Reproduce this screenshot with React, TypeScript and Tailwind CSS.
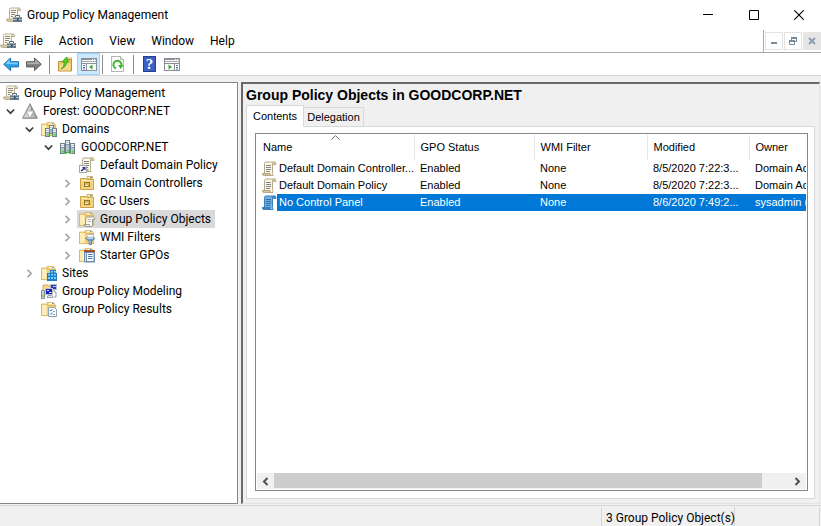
import type { ReactNode } from 'react';

const uiFont = "font-[Roboto,'Noto_Sans',sans-serif]";
const listFont = "font-['Liberation_Sans',Arial,sans-serif]";

function Icon({ children }: { children: ReactNode }) {
  return (
    <svg width="16" height="16" viewBox="0 0 16 16" className="block shrink-0" aria-hidden="true">
      {children}
    </svg>
  );
}

function ScrollShape({ blue = false }: { blue?: boolean }) {
  const paper = blue ? '#6fb2e2' : '#fdf8e4';
  const edge = blue ? '#3a80ba' : '#b3a888';
  const shade = blue ? '#3c86c4' : '#d6c690';
  const ink = blue ? '#2f6fa8' : '#83838c';
  return (
    <g>
      <path d="M4 1h9.500v2H12v10.500H3.500V2z" fill={paper} />
      <path d="M3.500 12V2.500Q3.500 1 5 1h9" fill="none" stroke={edge} />
      <path d="M11.500 3.500v9" stroke={edge} />
      <path d="M11.500 3.500V2q.5-1 2-1t1.500 1.500v1z" fill={shade} stroke={edge} strokeWidth=".8" />
      <path d="M1 12h8.500v3H3q-2 0-2-3z" fill={shade} />
      <path d="M1.500 12.500h7.500v2h3V13M1.500 12.500q0 2 2 2H11" fill="none" stroke={edge} />
      <path d="M5 4.500h5M5 6.500h5M5 8.500h5M5 10.500h4" stroke={ink} />
    </g>
  );
}

function FolderShape() {
  return (
    <g>
      <path d="M6 1.500h6.500L14 3v10H6z" fill="#f7dd95" stroke="#d3ab52" strokeWidth=".7" />
      <path d="M8.500 2.500h3" stroke="#fffbe8" />
      <path d="M11 2.500h1.500" stroke="#4f9fe0" />
      <path d="M0 3h5.500L7 4.500h8V15H0z" fill="#f2d17c" />
      <path d="M1 4h4v10.500H1z" fill="#fdecb4" />
      <path d="M5 4.500v10" stroke="#fff6d6" />
      <path d="M.4 3h5.200L7 4.500h7.600V14.600H.4z" fill="none" stroke="#d3ab52" strokeWidth=".7" />
    </g>
  );
}

function Tower({ x, y, h }: { x: number; y: number; h: number }) {
  return (
    <g>
      <rect x={x} y={y} width="5" height={h} fill="#70828c" />
      <rect x={x + 1} y={y + 1} width="3" height={h - 2} fill="#b4c6d0" />
      <path d={`M${x + 1} ${y + 1.5}h3M${x + 1} ${y + 3.5}h3`} stroke="#f1f7fa" />
      <path d={`M${x + 1} ${y + 4.5}h3`} stroke="#8699a4" />
      <rect x={x + 2} y={y + h - 3} width="2" height="1.500" fill="#4fe024" />
    </g>
  );
}

const ConsoleIcon = () => (
  <Icon>
    <path d="M4 1h9.500v2H12v9H3.500V2z" fill="#fdf8e6" />
    <path d="M3.500 12V2.500Q3.500 1 5 1h8.500" fill="none" stroke="#b5ae9a" />
    <path d="M11.500 8V2.500q.5-1.500 2-1.200t1 2.200h-3" fill="#e2d8b8" stroke="#b5ae9a" />
    <path d="M.5 12h7v2.500h-5q-2 0-2-2.500z" fill="#dccfa4" stroke="#a89f84" strokeWidth=".8" />
    <path d="M5 3.500h5M5 5.500h5M5 7.500h4M5 9.500h2" stroke="#88888e" />
    <path d="M9.500 10V8.500h4V10" fill="none" stroke="#566573" />
    <rect x="7" y="10" width="9" height="5" fill="#647b8e" />
    <path d="M7.500 10.500h8" stroke="#93a7b7" />
    <path d="M7 12.500h9" stroke="#aebdc9" />
    <rect x="11" y="11.500" width="1.500" height="2" fill="#2b3944" />
  </Icon>
);

const ForestIcon = () => (
  <Icon>
    <path d="M8 .6 15.500 15.400H.5z" fill="#f2f2f2" stroke="#8b8b8b" strokeWidth=".9" strokeLinejoin="round" />
    <path d="M8 1.500 11.500 8H4.600z" fill="#d4d4d4" stroke="#8f8f8f" strokeWidth=".7" />
    <path d="M4.400 8.300 7.800 14.800H1z" fill="#d4d4d4" stroke="#8f8f8f" strokeWidth=".7" />
    <path d="M11.600 8.300 15 14.800H8.200z" fill="#bcbcbc" stroke="#8f8f8f" strokeWidth=".7" />
    <path d="M8.500 2 11 7.500H9zM12 9l2.500 5.500H13z" fill="#8e8e8e" />
    <path d="M5.200 8.700h5.600L8 14z" fill="#ffffff" />
  </Icon>
);

const DomainsIcon = () => (
  <Icon>
    <FolderShape />
    <Tower x={8} y={4} h={9} />
    <Tower x={4} y={7} h={9} />
    <Tower x={11} y={7} h={9} />
  </Icon>
);

const DomainIcon = () => (
  <Icon>
    <Tower x={5} y={1} h={13} />
    <Tower x={0} y={4} h={11} />
    <Tower x={10} y={4} h={11} />
    <rect x="4" y="14" width="3" height="1" fill="#4fe024" />
    <rect x="9" y="14" width="3" height="1" fill="#4fe024" />
  </Icon>
);

const ScrollIcon = ({ blue = false }: { blue?: boolean }) => (
  <Icon>
    <ScrollShape blue={blue} />
  </Icon>
);

const LinkedScrollIcon = () => (
  <Icon>
    <ScrollShape />
    <rect x=".5" y="8.500" width="7" height="7" fill="#fff" stroke="#a5a5a5" />
    <path d="M3 10h3.500v3.500L5.300 12.300 2.800 14.500 1.700 13.500 4.200 11.200z" fill="#28288e" />
  </Icon>
);

const OuIcon = () => (
  <Icon>
    <path d="M8 1.500h5.500V4H8z" fill="#fbeebb" stroke="#cda347" strokeWidth=".8" />
    <path d="M11 2.500h2" stroke="#4f9fe0" />
    <path d="M1.500 3.500H7L8 4.500h6.500v10h-13z" fill="#f3d37c" stroke="#cda347" />
    <path d="M2.500 5.500h11" stroke="#fdebb2" />
    <rect x="5" y="7" width="6" height="5" fill="#8f7528" />
    <rect x="6" y="8" width="4" height="3" fill="#d8bd62" />
    <path d="M6 10.500h3" stroke="#fff0bf" />
  </Icon>
);

const GpoFolderIcon = () => (
  <Icon>
    <FolderShape />
    <path d="M7.500 6h7q1.500.3 1 2.500h-2V15H7z" fill="#fdfcf5" />
    <path d="M6.500 13V7.500Q6.500 6 8 6h6.500q1.500.5 1 2.500h-2V14q0 1-1 1.500H6.500q-1.500-.5-1.500-2h5.500q0 1.500 1 2" fill="none" stroke="#9f9a8a" />
    <path d="M8.500 8.500h3.500M8.500 10.500h3.500" stroke="#b5b5b5" />
  </Icon>
);

const WmiIcon = () => (
  <Icon>
    <FolderShape />
    <path d="M9 5h6v4H9z" fill="#f4f4f4" />
    <path d="M9.500 5.500h5v3" fill="none" stroke="#b7b7b7" />
    <path d="M6.500 9h9.200L12.500 12.500v3h-2.500v-3z" fill="#6d97c2" stroke="#4d7299" strokeWidth=".8" />
    <path d="M8 9.500h6" stroke="#c8dff3" />
    <path d="M10.800 12v3" stroke="#b5d2ec" />
  </Icon>
);

const StarterIcon = () => (
  <Icon>
    <FolderShape />
    <path d="M5 4h11v11.500H5z" fill="#6f90b5" />
    <path d="M5 3h11v2H5z" fill="#a34d24" />
    <path d="M6 6h1v8.500H6z" fill="#c9dcef" />
    <path d="M8 6h6.500v8H8z" fill="#fafcff" />
    <path d="M9 7.500h4.500M9 9.500h4.500M9 11.500h4.500" stroke="#4d7fb8" />
  </Icon>
);

const SitesIcon = () => (
  <Icon>
    <FolderShape />
    <path d="M9 5h6v3h1v8H6V8h3z" fill="#1f7fc6" />
    <path d="M10 6h2v1.500h-2zM13 6h2v1.500h-2zM10 9h2v1.500h-2zM13 9h2v1.500h-2zM7 9h2v1.500H7zM7 12h2v2H7zM10 12h2v2h-2zM13 12h2v2h-2z" fill="#7fd0fa" />
  </Icon>
);

const ModelingIcon = () => (
  <Icon>
    <path d="M2 2h5l1 1h3v5H2z" fill="#f6da88" stroke="#c29d45" strokeWidth=".8" />
    <rect x="9" y="1" width="7" height="6" fill="#b9bdc5" />
    <rect x="10" y="2" width="5" height="4" fill="#2a36c0" />
    <path d="M12 3.500h3" stroke="#b9c2ff" />
    <path d="M13 7v2h2v5h-2" fill="none" stroke="#9ba0a8" />
    <rect x="4" y="5" width="8" height="7" fill="#c3c7ce" />
    <rect x="5" y="6" width="6" height="5" fill="#1a22b4" />
    <path d="M6 7.500h2M8 9.500h2.500" stroke="#e4e7ff" strokeWidth="1.200" />
    <path d="M6 14.500h6l-1-2H7z" fill="#e3e5e8" stroke="#8a8f97" strokeWidth=".8" />
    <path d="M.5 7.500h3v8h-3z" fill="#cfd2d7" stroke="#868b93" />
    <rect x="1" y="12.500" width="2" height="1" fill="#4cc43c" />
  </Icon>
);

const ResultsIcon = () => (
  <Icon>
    <FolderShape />
    <path d="M7.500 6.500h6l2 2v7h-8z" fill="#fbfdff" stroke="#93a1b0" />
    <path d="M9 9l1 1 1.500-2M9 12.500l1 1 1.500-2" fill="none" stroke="#2a6fc0" strokeWidth=".9" />
    <path d="M12 10.500h2M12 13.500h2" stroke="#93a1b0" />
  </Icon>
);

const BackIcon = () => (
  <Icon>
    <path d="M.7 8.300 7.500 2V5.700h8v5.200h-8v3.700z" fill="#2f9fe6" stroke="#1a6fb0" strokeLinejoin="round" />
    <path d="M2 8 6.800 3.600v3h8v1.600z" fill="#7cccf8" />
  </Icon>
);

const ForwardIcon = () => (
  <Icon>
    <path d="M15.300 8.300 8.500 2V5.700h-8v5.200h8v3.700z" fill="#7f7f7f" stroke="#5f5f5f" strokeLinejoin="round" />
    <path d="M14 8 9.200 3.600v3h-8v1.600z" fill="#b0b0b0" />
  </Icon>
);

const UpFolderIcon = () => (
  <Icon>
    <path d="M9 2h5.500v4H9z" fill="#fbf0c8" stroke="#cda347" strokeWidth=".8" />
    <path d="M1.500 5.500h6l1.500-2h5.500v11.500h-13z" fill="#eec560" stroke="#b8913c" />
    <path d="M2.500 7.500h11v7h-11z" fill="#f6da8a" />
    <path d="M4 13q3.500-2.500 3.300-7H4.800L9.500 1l2 5H9.700Q9.500 11 4 13z" fill="#4fcf24" stroke="#2f9a14" strokeWidth=".7" />
  </Icon>
);

const PaneIcon = ({ right = false }: { right?: boolean }) => (
  <Icon>
    <rect x=".5" y="2.500" width="15" height="12" fill="#fbfbfb" stroke="#8b8f95" />
    <path d="M1 3.500h14" stroke="#8b8f95" />
    <path d="M11 3.500h1M13 3.500h1" stroke="#fff" />
    <path d="M1 5.500h14" stroke="#a6aab0" />
    <path d="M1 7.500h14" stroke="#8b8f95" />
    {right ? (
      <g>
        <path d="M10.500 8v6" stroke="#8b8f95" />
        <path d="M12 9.500h2M12 11.500h2M12 13h2" stroke="#4e7fb0" />
        <path d="M4.500 8.500v5l3.500-2.500z" fill="#35ad32" />
      </g>
    ) : (
      <g>
        <path d="M5.500 8v6" stroke="#8b8f95" />
        <path d="M2 9.500h2M2 11.500h2M2 13h2" stroke="#4e7fb0" />
        <path d="M11.500 8.500v5L8 11z" fill="#35ad32" />
      </g>
    )}
  </Icon>
);

const RefreshIcon = () => (
  <Icon>
    <path d="M1.500.5h9l3 3v12h-12z" fill="#fdfdfd" stroke="#b5b5b5" />
    <path d="M10.500.5v3h3" fill="#eaeaea" stroke="#b5b5b5" />
    <path d="M6 12.500A4 4 0 1 1 11.200 10" fill="none" stroke="#3cb82e" strokeWidth="2" />
    <path d="M8 9h5.500l-2.800 4z" fill="#3cb82e" />
  </Icon>
);

const HelpIcon = () => (
  <span className="flex h-4 w-[13px] items-center justify-center border border-[#26408f] bg-[#3c5fc4] font-['Liberation_Serif',serif] text-[15px] leading-none font-bold text-white">
    ?
  </span>
);

const Chevron = ({ open }: { open: boolean }) => (
  <svg width="9" height="9" viewBox="0 0 9 9" className="block" aria-hidden="true">
    {open ? (
      <path d="M.8 2.500 4.500 6.200 8.200 2.500" fill="none" stroke="#404040" strokeWidth="1.700" />
    ) : (
      <path d="M2.500.8 6.200 4.500 2.500 8.200" fill="none" stroke="#a6a6a6" strokeWidth="1.700" />
    )}
  </svg>
);

type Node = { label: string; icon: ReactNode; indent: string; open?: boolean; selected?: boolean };

const nodes: Node[] = [
  { label: 'Group Policy Management', icon: <ConsoleIcon />, indent: 'pl-0' },
  { label: 'Forest: GOODCORP.NET', icon: <ForestIcon />, indent: 'pl-[5px]', open: true },
  { label: 'Domains', icon: <DomainsIcon />, indent: 'pl-[24px]', open: true },
  { label: 'GOODCORP.NET', icon: <DomainIcon />, indent: 'pl-[43px]', open: true },
  { label: 'Default Domain Policy', icon: <LinkedScrollIcon />, indent: 'pl-[76px]' },
  { label: 'Domain Controllers', icon: <OuIcon />, indent: 'pl-[62px]', open: false },
  { label: 'GC Users', icon: <OuIcon />, indent: 'pl-[62px]', open: false },
  { label: 'Group Policy Objects', icon: <GpoFolderIcon />, indent: 'pl-[62px]', open: false, selected: true },
  { label: 'WMI Filters', icon: <WmiIcon />, indent: 'pl-[62px]', open: false },
  { label: 'Starter GPOs', icon: <StarterIcon />, indent: 'pl-[62px]', open: false },
  { label: 'Sites', icon: <SitesIcon />, indent: 'pl-[24px]', open: false },
  { label: 'Group Policy Modeling', icon: <ModelingIcon />, indent: 'pl-[38px]' },
  { label: 'Group Policy Results', icon: <ResultsIcon />, indent: 'pl-[38px]' },
];

function TreeRow({ node }: { node: Node }) {
  return (
    <li className={`flex h-[18px] items-center ${node.indent}`}>
      {node.open !== undefined && (
        <button type="button" aria-label={`Toggle ${node.label}`} className="w-[14px] shrink-0 pt-px">
          <Chevron open={node.open} />
        </button>
      )}
      <button
        type="button"
        className={`flex h-[18px] items-center gap-[5px] pr-1 pl-[2px] whitespace-nowrap ${node.selected ? 'bg-[#d9d9d9]' : ''}`}
      >
        {node.icon}
        <span>{node.label}</span>
      </button>
    </li>
  );
}

const rows = [
  { name: 'Default Domain Controller...', modified: '8/5/2020 7:22:3...', owner: 'Domain Ad', selected: false },
  { name: 'Default Domain Policy', modified: '8/5/2020 7:22:3...', owner: 'Domain Ad', selected: false },
  { name: 'No Control Panel', modified: '8/6/2020 7:49:2...', owner: 'sysadmin (G', selected: true },
];

const columns = ['GPO Status', 'WMI Filter', 'Modified', 'Owner'];

function PolicyTable() {
  return (
    <table className="w-full table-fixed border-collapse text-left text-[11px] leading-[17px] whitespace-nowrap">
      <colgroup>
        <col className="w-[157px]" />
        <col className="w-[120px]" />
        <col className="w-[113px]" />
        <col className="w-[102px]" />
        <col />
      </colgroup>
      <thead>
        <tr className="h-[25px]">
          <th className="relative border-r border-[#e5e5e5] p-0 pl-[6px] font-normal">
            <svg width="9" height="5" viewBox="0 0 9 5" className="absolute top-0 left-[74px]" aria-hidden="true">
              <path d="M.5 4.500 4.500.7 8.500 4.500" fill="none" stroke="#6d6d6d" />
            </svg>
            Name
          </th>
          {columns.map((c) => (
            <th key={c} className="overflow-hidden border-r border-[#e5e5e5] p-0 pl-[6px] font-normal last:border-r-0">
              {c}
            </th>
          ))}
        </tr>
      </thead>
      <tbody>
        {rows.map((r) => {
          const tone = r.selected ? 'bg-[#0078d7] text-white' : '';
          return (
            <tr key={r.name} className="h-[17px]">
              <td className="overflow-hidden p-0 pl-1">
                <div className="flex h-[17px] items-center">
                  <ScrollIcon blue={r.selected} />
                  <span className={`grow pl-[2px] ${tone}`}>{r.name}</span>
                </div>
              </td>
              <td className={`overflow-hidden p-0 pl-[6px] ${tone}`}>Enabled</td>
              <td className={`overflow-hidden p-0 pl-[6px] ${tone}`}>None</td>
              <td className={`overflow-hidden p-0 pl-[6px] ${tone}`}>{r.modified}</td>
              <td className={`overflow-hidden p-0 pl-[6px] ${tone}`}>{r.owner}</td>
            </tr>
          );
        })}
      </tbody>
    </table>
  );
}

const Separator = () => <span className="h-[19px] w-px bg-[#8c8c8c]" />;

export default function App() {
  return (
    <div className={`flex h-screen flex-col overflow-hidden bg-[#f0f0f0] text-[12px] leading-4 text-black ${uiFont}`}>
      <header className="flex h-[30px] shrink-0 items-center bg-white pl-[6px]">
        <ConsoleIcon />
        <h1 className="grow pl-[5px]">Group Policy Management</h1>
        <button type="button" aria-label="Minimize" className="flex h-full w-[46px] items-center justify-center">
          <svg width="10" height="10" viewBox="0 0 10 10"><path d="M0 4.500h10" stroke="#000" /></svg>
        </button>
        <button type="button" aria-label="Maximize" className="flex h-full w-[45px] items-center justify-center">
          <svg width="10" height="10" viewBox="0 0 10 10"><path d="M.5.5h9v9h-9z" fill="none" stroke="#000" /></svg>
        </button>
        <button type="button" aria-label="Close" className="flex h-full w-[45px] items-center justify-center">
          <svg width="10" height="10" viewBox="0 0 10 10"><path d="M.3.3l9.400 9.400M9.700.3.3 9.700" stroke="#000" strokeWidth="1.100" /></svg>
        </button>
      </header>

      <nav className="flex h-[23px] shrink-0 items-center border-b border-[#a8a8a8] bg-white">
        <ConsoleIcon />
        <div className="flex grow gap-4 pl-2">
          <button type="button">File</button>
          <button type="button">Action</button>
          <button type="button">View</button>
          <button type="button">Window</button>
          <button type="button">Help</button>
        </div>
        <div className="flex h-full items-center gap-px border-l border-[#a8a8a8] pl-px">
          <button type="button" aria-label="Minimize child window" className="flex h-[18px] w-[18px] items-center justify-center border border-[#e3e3e3]">
            <svg width="8" height="8" viewBox="0 0 8 8"><path d="M1 6h6" stroke="#7a8b9b" strokeWidth="2" /></svg>
          </button>
          <button type="button" aria-label="Restore child window" className="flex h-[18px] w-[18px] items-center justify-center border border-[#e3e3e3]">
            <svg width="8" height="8" viewBox="0 0 8 8">
              <path d="M2.500 3V.5h5v4H6" fill="none" stroke="#7a8b9b" />
              <path d="M2 1h6" stroke="#7a8b9b" strokeWidth="2" />
              <path d="M.5 3.500h5v4h-5z" fill="#fff" stroke="#7a8b9b" />
              <path d="M0 4h6" stroke="#7a8b9b" strokeWidth="2" />
            </svg>
          </button>
          <button type="button" aria-label="Close child window" className="flex h-[18px] w-[18px] items-center justify-center bg-[#e5e5e5]">
            <svg width="8" height="8" viewBox="0 0 8 8"><path d="M1 1l6 6M7 1 1 7" stroke="#8f9eac" strokeWidth="2" /></svg>
          </button>
        </div>
      </nav>

      <div role="toolbar" className="flex h-[23px] shrink-0 items-center border-b border-[#d6d6d6] bg-white pl-[3px]">
        <button type="button" aria-label="Back"><BackIcon /></button>
        <button type="button" aria-label="Forward" className="px-[7px]"><ForwardIcon /></button>
        <Separator />
        <button type="button" aria-label="Up one level" className="pr-1 pl-[7px]"><UpFolderIcon /></button>
        <button type="button" aria-label="Show console tree" className="flex h-[22px] w-[23px] items-center justify-center border border-[#99d1ff] bg-[#cce8ff]">
          <PaneIcon />
        </button>
        <span className="w-[2px]" />
        <Separator />
        <button type="button" aria-label="Refresh" className="px-[7px]"><RefreshIcon /></button>
        <Separator />
        <button type="button" aria-label="Help" className="pr-2 pl-[9px]"><HelpIcon /></button>
        <button type="button" aria-label="Show action pane"><PaneIcon right /></button>
      </div>

      <main className="flex min-h-0 grow gap-[3px] pt-[6px] pr-px pb-px">
        <aside className="w-[238px] shrink-0 overflow-hidden border border-l-0 border-[#828790] bg-white pt-px pl-px">
          <ul>
            {nodes.map((n, i) => (
              <TreeRow key={i} node={n} />
            ))}
          </ul>
        </aside>

        <section className="flex min-w-0 grow flex-col border-t-2 border-r border-b border-l-2 border-t-[#696969] border-r-[#e3e3e3] border-b-[#e3e3e3] border-l-[#696969] pr-1 pb-1 pl-[3px]">
          <h2 className={`h-[21px] shrink-0 text-[14px] leading-[22px] font-bold ${listFont}`}>
            Group Policy Objects in GOODCORP.NET
          </h2>
          <div role="tablist" className={`flex shrink-0 items-end text-[11px] ${listFont}`}>
            <button type="button" role="tab" aria-selected="true" className="z-10 -mb-px h-[22px] w-[58px] border border-b-0 border-[#d9d9d9] bg-white pb-[2px]">
              Contents
            </button>
            <button type="button" role="tab" aria-selected="false" className="h-[19px] w-[60px] border border-b-0 border-l-0 border-[#d9d9d9]">
              Delegation
            </button>
          </div>
          <div className={`flex min-h-0 grow flex-col border border-[#d9d9d9] bg-white pt-[6px] pr-[6px] pb-[7px] pl-2 ${listFont}`}>
            <div className="flex min-h-0 grow flex-col overflow-hidden border border-[#828790] p-px">
              <div className="min-h-0 grow overflow-hidden">
                <PolicyTable />
              </div>
              <div className="flex h-4 shrink-0 bg-[#f0f0f0]">
                <button type="button" aria-label="Scroll left" className="flex w-[17px] items-center justify-center">
                  <svg width="7" height="9" viewBox="0 0 7 9"><path d="M5.500 1 2 4.500 5.500 8" fill="none" stroke="#505050" strokeWidth="2" /></svg>
                </button>
                <div className="grow pr-[27px]">
                  <div className="h-[15px] bg-[#cdcdcd]" />
                </div>
                <button type="button" aria-label="Scroll right" className="flex w-[17px] items-center justify-center">
                  <svg width="7" height="9" viewBox="0 0 7 9"><path d="M1.500 1 5 4.500 1.500 8" fill="none" stroke="#505050" strokeWidth="2" /></svg>
                </button>
              </div>
            </div>
          </div>
        </section>
      </main>

      <footer className="flex h-[21px] shrink-0 border-t border-[#d7d7d7] pt-px pr-px">
        <div className="grow border-r border-[#d7d7d7]" />
        <div className="w-[133px] border-r border-[#d7d7d7] pt-[3px] pl-1 whitespace-nowrap">3 Group Policy Object(s)</div>
        <div className="w-[85px] border-r border-[#d7d7d7]" />
      </footer>
    </div>
  );
}
